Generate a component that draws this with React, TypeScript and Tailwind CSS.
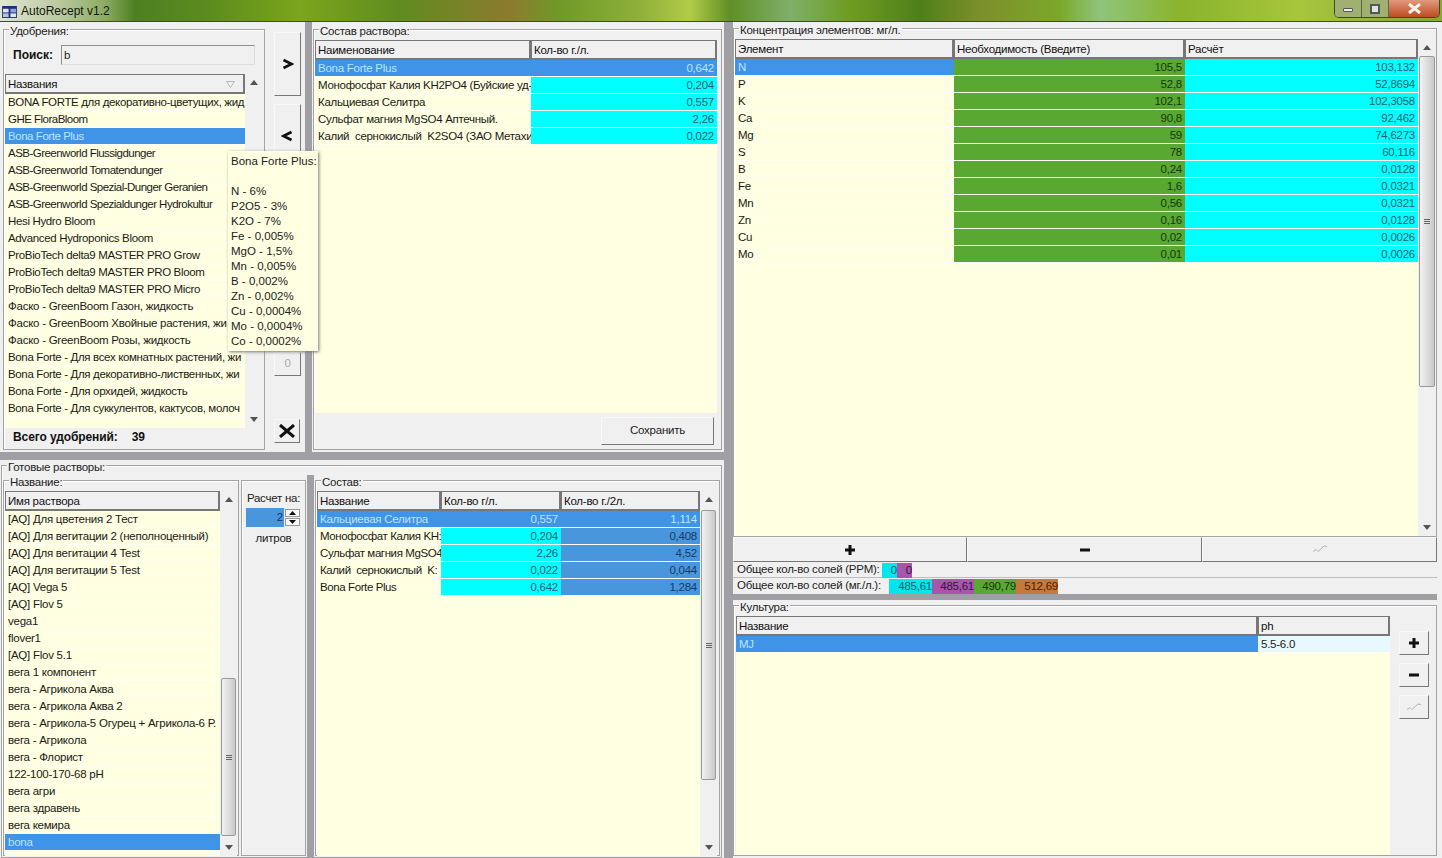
import React from "react";

type Cell = { t: string; cls?: string };
type Col = { title: string; w: string; sort?: boolean };

const CYAN = "bg-[#00ffff] text-right text-[#26606f]";
const GREEN = "bg-[#58a832] text-right text-[#16380c]";
const SEL = "bg-[#3f94e8] text-[#b9e4ff]";
const SELR = "bg-[#3f94e8] text-right text-[#b9e4ff]";
const MID = "bg-[#4a96dc] text-right text-[#123c66]";
const TIGHT = "text-[#1a1a1a] tracking-[-0.35px]";
const TIGHTER = "text-[#1a1a1a] tracking-[-0.52px]";

const fertilizers: [string, string?][] = [
    ["BONA FORTE для декоративно-цветущих, жид", TIGHT],
    ["GHE FloraBloom", TIGHTER],
    ["Bona Forte Plus", "bg-[#3f94e8] text-[#b9e4ff] tracking-[-0.45px]"],
    ["ASB-Greenworld Flussigdunger", TIGHTER],
    ["ASB-Greenworld Tomatendunger", TIGHTER],
    ["ASB-Greenworld Spezial-Dunger Geranien", TIGHTER],
    ["ASB-Greenworld Spezialdunger Hydrokultur", TIGHTER],
    ["Hesi Hydro Bloom", TIGHT],
    ["Advanced Hydroponics Bloom", TIGHT],
    ["ProBioTech delta9 MASTER PRO Grow", TIGHT],
    ["ProBioTech delta9 MASTER PRO Bloom", TIGHT],
    ["ProBioTech delta9 MASTER PRO Micro", TIGHT],
    ["Фаско - GreenBoom Газон, жидкость"],
    ["Фаско - GreenBoom Хвойные растения, жи"],
    ["Фаско - GreenBoom Розы, жидкость"],
    ["Bona Forte - Для всех комнатных растений, жи", TIGHT],
    ["Bona Forte - Для декоративно-лиственных, жи", TIGHT],
    ["Bona Forte - Для орхидей, жидкость", TIGHT],
    ["Bona Forte - Для суккулентов, кактусов, молоч", TIGHT],
];

const mixture = [
    ["Bona Forte Plus", "0,642"],
    ["Монофосфат Калия KH2PO4 (Буйские уд-", "0,204"],
    ["Кальциевая Селитра", "0,557"],
    ["Сульфат магния MgSO4 Аптечный.", "2,26"],
    ["Калий  сернокислый  K2SO4 (ЗАО Метахи", "0,022"],
];

const elements = [
    ["N", "105,5", "103,132"],
    ["P", "52,8", "52,8694"],
    ["K", "102,1", "102,3058"],
    ["Ca", "90,8", "92,462"],
    ["Mg", "59", "74,6273"],
    ["S", "78", "60,116"],
    ["B", "0,24", "0,0128"],
    ["Fe", "1,6", "0,0321"],
    ["Mn", "0,56", "0,0321"],
    ["Zn", "0,16", "0,0128"],
    ["Cu", "0,02", "0,0026"],
    ["Mo", "0,01", "0,0026"],
];

const solutions = [
    "[AQ] Для цветения 2 Тест",
    "[AQ] Для вегитации 2 (неполноценный)",
    "[AQ] Для вегитации 4 Test",
    "[AQ] Для вегитации 5 Test",
    "[AQ] Vega 5",
    "[AQ] Flov 5",
    "vega1",
    "flover1",
    "[AQ] Flov 5.1",
    "вега 1 компонент",
    "вега - Агрикола Аква",
    "вега - Агрикола Аква 2",
    "вега - Агрикола-5 Огурец + Агрикола-6 Р.",
    "вега - Агрикола",
    "вега - Флорист",
    "122-100-170-68 pH",
    "вега агри",
    "вега здравень",
    "вега кемира",
    "bona",
];

const solutionParts = [
    ["Кальциевая Селитра", "0,557", "1,114"],
    ["Монофосфат Калия KH:", "0,204", "0,408"],
    ["Сульфат магния MgSO4", "2,26", "4,52"],
    ["Калий  сернокислый  K:", "0,022", "0,044"],
    ["Bona Forte Plus", "0,642", "1,284"],
];

const tooltipLines = [
    "Bona Forte Plus:",
    "\u00a0",
    "N - 6%",
    "P2O5 - 3%",
    "K2O - 7%",
    "Fe - 0,005%",
    "MgO - 1,5%",
    "Mn - 0,005%",
    "B - 0,002%",
    "Zn - 0,002%",
    "Cu - 0,0004%",
    "Mo - 0,0004%",
    "Co - 0,0002%",
];

const Group = ({ label, className, children }: { label?: string; className: string; children?: React.ReactNode }) => (
    <div className={`relative border border-[#a3a3a3] shadow-[inset_1px_1px_0_#fff] ${className}`}>
        {label && <span className="absolute -top-[5px] left-[5px] bg-[#f0f0f0] px-px leading-[13px] text-[#222]">{label}</span>}
        {children}
    </div>
);

const Grid = ({ cols, rows, className }: { cols: Col[]; rows: Cell[][]; className?: string }) => (
    <div className={`flex min-w-0 flex-col bg-[#ffffe1] ${className ?? ""}`}>
        <div className="flex h-[20px] shrink-0">
            {cols.map((c) => (
                <div
                    key={c.title}
                    className={`${c.w} flex h-full items-center justify-between border border-r-2 border-b-2 border-[#777] bg-[#f0f0f0] pl-[2px] pr-[8px] pt-[2px] text-[#111]`}
                >
                    <span>{c.title}</span>
                    {c.sort && (
                        <svg width="9" height="7" viewBox="0 0 9 7" fill="none" stroke="#b8b8b8">
                            <path d="M0.500 0.500 H8.500 L4.500 6.500 Z" />
                        </svg>
                    )}
                </div>
            ))}
        </div>
        {rows.map((r, i) => (
            <div key={i} className="flex h-[17px] shrink-0 border-b border-[#fffff8]">
                {r.map((cell, j) => (
                    <div
                        key={j}
                        className={`${cols[j].w} overflow-hidden whitespace-pre px-[3px] leading-[16px] ${cell.cls ?? "text-[#1a1a1a]"}`}
                    >
                        {cell.t}
                    </div>
                ))}
            </div>
        ))}
    </div>
);

const Arrow = ({ up }: { up?: boolean }) => (
    <div className="flex h-[17px] shrink-0 items-center justify-center">
        <svg width="8" height="5" viewBox="0 0 8 5">
            <path d={up ? "M0 5 L4 0 L8 5 Z" : "M0 0 L8 0 L4 5 Z"} fill="#555" />
        </svg>
    </div>
);

const ScrollBar = ({ offset, thumb, className }: { offset?: string; thumb?: string; className: string }) => (
    <div className={`flex shrink-0 flex-col bg-[#f0f0f0] ${className}`}>
        <Arrow up />
        {thumb && (
            <>
                <div className={`${offset} shrink-0`} />
                <div className={`${thumb} mx-px flex shrink-0 items-center justify-center rounded-[2px] border border-[#9a9a9a] bg-[linear-gradient(90deg,#f2f2f2,#c9c9c9)]`}>
                    <div className="flex flex-col gap-px">
                        <div className="h-px w-[6px] bg-[#666]" />
                        <div className="h-px w-[6px] bg-[#666]" />
                        <div className="h-px w-[6px] bg-[#666]" />
                    </div>
                </div>
            </>
        )}
        <div className="flex-1" />
        <Arrow />
    </div>
);

const RaisedButton = ({ className, children }: { className: string; children?: React.ReactNode }) => (
    <div className={`flex shrink-0 items-center justify-center border border-t-[#f8f8f8] border-r-[#777] border-b-[#777] border-l-[#f8f8f8] bg-[#f0f0f0] ${className}`}>
        {children}
    </div>
);

const Plus = () => (
    <svg width="10" height="10" viewBox="0 0 10 10">
        <path d="M3.500 0h3v3.500H10v3H6.500V10h-3V6.500H0v-3h3.500z" fill="#111" />
    </svg>
);

const Minus = () => (
    <svg width="10" height="4" viewBox="0 0 10 4">
        <rect width="10" height="3" y="0.500" fill="#111" />
    </svg>
);

const Check = () => (
    <svg width="16" height="9" viewBox="0 0 16 9" fill="none" stroke="#b4b4b4" strokeWidth="1">
        <path d="M1 6.500 L4 4.500 L6 6.500 L12 1 L15 1.500" />
    </svg>
);

const Chevron = ({ d }: { d: string }) => (
    <svg width="13" height="12" viewBox="0 0 12 12" fill="none" stroke="#111" strokeWidth="2.600">
        <path d={d} />
    </svg>
);

const TitleBar = () => (
    <div className="flex h-[22px] shrink-0 items-start justify-between border-b border-[#3d4a2c] bg-[linear-gradient(90deg,#dfe5d2_0px,#b9c9a0_60px,#8cab62_105px,#4e7f22_135px,#5c8c1e_210px,#7ba51c_300px,#5f8c20_400px,#8d7a2e_510px,#6f9a28_560px,#8fb03a_640px,#b2cb48_690px,#5f8f25_730px,#7fb06a_790px,#6e9c22_850px,#4f7f1a_920px,#7d8f2a_980px,#7ba82a_1060px,#8fc47c_1100px,#8ab42c_1180px,#a7c63c_1300px,#8aa838_1420px)]">
        <div className="flex h-[21px] items-center pl-[2px]">
            <svg width="15" height="12" viewBox="0 0 16 13" className="mt-[2px]">
                <rect width="16" height="13" fill="#1f2f78" />
                <rect x="1" y="3" width="6" height="4" fill="#dfe6f4" />
                <rect x="9" y="3" width="6" height="4" fill="#8fa6d6" />
                <rect x="1" y="8" width="6" height="4" fill="#b7c4e0" />
                <rect x="9" y="8" width="6" height="4" fill="#dfe6f4" />
            </svg>
            <span className="ml-[4px] text-[12px] tracking-normal text-[#10180a]">AutoRecept v1.2</span>
        </div>
        <div className="mr-[2px] flex h-[18px] overflow-hidden rounded-b-[5px] border border-t-0 border-[#3f4a2c]">
            <div className="flex w-[27px] items-center justify-center border-r border-[#5b6a3c] bg-[#9fb070]">
                <div className="mt-[2px] h-[4px] w-[10px] rounded-[1px] border border-[#555] bg-[#eee]" />
            </div>
            <div className="flex w-[27px] items-center justify-center border-r border-[#5b6a3c] bg-[#9fb070]">
                <div className="h-[10px] w-[10px] border-2 border-[#4d5a55] bg-[#dfe4da]" />
            </div>
            <div className="flex w-[50px] items-center justify-center bg-[linear-gradient(180deg,#e09a7c,#c04a22)]">
                <svg width="13" height="11" viewBox="0 0 13 11">
                    <path d="M1 1 L12 10 M12 1 L1 10" stroke="#f4f0ea" strokeWidth="3" />
                </svg>
            </div>
        </div>
    </div>
);

const Tooltip = () => (
    <div className="absolute left-[228px] top-[151px] h-[200px] w-[90px] bg-[#ffffe1] pl-[3px] pt-[3px] text-[11.5px] leading-[15px] tracking-normal text-[#222] shadow-[1px_1px_3px_#777]">
        {tooltipLines.map((l, i) => (
            <div key={i} className="whitespace-nowrap">{l}</div>
        ))}
    </div>
);

const Fertilizers = () => (
    <Group label="Удобрения:" className="ml-[3px] mt-[7px] flex h-[421px] w-[262px] shrink-0 flex-col">
        <div className="mt-[15px] flex h-[19px] items-center">
            <span className="ml-[9px] w-[48px] text-[12px] font-bold tracking-normal text-[#111]">Поиск:</span>
            <div className="h-[20px] w-[194px] border border-[#8f8f8f] border-b-[#ddd] border-r-[#ddd] bg-[#f0f0f0] pl-[2px] leading-[18px]">b</div>
        </div>
        <div className="ml-px mt-[10px] flex h-[354px]">
            <Grid
                className="w-[240px]"
                cols={[{ title: "Названия", w: "w-[240px]", sort: true }]}
                rows={fertilizers.map(([t, cls]) => [{ t, cls }])}
            />
            <ScrollBar className="w-[17px]" />
        </div>
        <div className="ml-[9px] mt-[2px] flex gap-[14px] text-[12px] font-bold leading-[15px] tracking-[-0.1px] text-[#111]">
            <span>Всего удобрений:</span>
            <span>39</span>
        </div>
    </Group>
);

const ActionButtons = () => (
    <div className="ml-[9px] flex w-[27px] shrink-0 flex-col pt-[10px]">
        <RaisedButton className="h-[64px] w-[27px]"><Chevron d="M2 2 L10 6 L2 10" /></RaisedButton>
        <RaisedButton className="mt-[8px] h-[64px] w-[27px]"><Chevron d="M10 2 L2 6 L10 10" /></RaisedButton>
        <div className="h-[184px]" />
        <RaisedButton className="h-[24px] w-[27px] text-[#aaa]">0</RaisedButton>
        <div className="h-[43px]" />
        <RaisedButton className="h-[24px] w-[26px]">
            <svg width="16" height="14" viewBox="0 0 16 14">
                <path d="M1 1 L15 13 M15 1 L1 13" stroke="#111" strokeWidth="3" />
            </svg>
        </RaisedButton>
    </div>
);

const Mixture = () => (
    <Group label="Состав раствора:" className="ml-px mt-[7px] flex h-[421px] w-[409px] shrink-0 flex-col">
        <Grid
            className="ml-px mt-[10px] h-[373px] w-[402px]"
            cols={[{ title: "Наименование", w: "w-[216px]" }, { title: "Кол-во г./л.", w: "w-[186px]" }]}
            rows={mixture.map((r, i) => [
                { t: r[0], cls: i === 0 ? SEL : "text-[#1a1a1a] tracking-[-0.3px]" },
                { t: r[1], cls: i === 0 ? SELR : CYAN },
            ])}
        />
        <RaisedButton className="ml-[287px] mt-[4px] h-[28px] w-[113px] text-[#222]">Сохранить</RaisedButton>
    </Group>
);

const SolutionList = () => (
    <Group label="Название:" className="ml-px flex h-[376px] w-[236px] shrink-0">
        <Grid
            className="ml-px mt-[10px] h-[365px] w-[215px]"
            cols={[{ title: "Имя раствора", w: "w-[215px]" }]}
            rows={solutions.map((n, i) => [{ t: n, cls: i === 19 ? SEL : undefined }])}
        />
        <ScrollBar className="mt-[10px] h-[365px] w-[17px]" offset="h-[170px]" thumb="h-[158px]" />
    </Group>
);

const Calc = () => (
    <Group className="ml-[2px] flex h-[376px] w-[65px] shrink-0 flex-col items-center">
        <span className="mt-[10px] leading-[15px]">Расчет на:</span>
        <div className="mt-[2px] flex h-[19px] w-[55px] items-center bg-[#c8d4de]">
            <div className="flex h-full flex-1 items-center justify-end bg-[#4a96dc] pr-px text-[#123c66]">2</div>
            <div className="flex h-full w-[17px] flex-col gap-px bg-[#eee] px-px py-px">
                <div className="flex flex-1 items-center justify-center border border-[#999] bg-[#f8f8f8]">
                    <svg width="7" height="4" viewBox="0 0 7 4"><path d="M0 4 L3.500 0 L7 4 Z" fill="#111" /></svg>
                </div>
                <div className="flex flex-1 items-center justify-center border border-[#999] bg-[#f8f8f8]">
                    <svg width="7" height="4" viewBox="0 0 7 4"><path d="M0 0 L7 0 L3.500 4 Z" fill="#111" /></svg>
                </div>
            </div>
        </div>
        <span className="mt-[4px] leading-[15px]">литров</span>
    </Group>
);

const SolutionParts = () => (
    <Group label="Состав:" className="ml-px flex h-[376px] w-[405px] shrink-0">
        <Grid
            className="ml-px mt-[10px] h-[365px] w-[383px]"
            cols={[
                { title: "Название", w: "w-[124px]" },
                { title: "Кол-во г/л.", w: "w-[120px]" },
                { title: "Кол-во г./2л.", w: "w-[139px]" },
            ]}
            rows={solutionParts.map((r, i) => [
                { t: r[0], cls: i === 0 ? SEL : "text-[#1a1a1a] tracking-[-0.4px]" },
                { t: r[1], cls: i === 0 ? SELR : CYAN },
                { t: r[2], cls: i === 0 ? SELR : MID },
            ])}
        />
        <ScrollBar className="mt-[10px] h-[365px] w-[17px]" offset="h-[2px]" thumb="h-[270px]" />
    </Group>
);

const Concentration = () => (
    <Group label="Концентрация элементов: мг/л." className="mt-[6px] flex h-[509px] w-[704px] shrink-0">
        <Grid
            className="ml-px mt-[10px] w-[683px]"
            cols={[
                { title: "Элемент", w: "w-[219px]" },
                { title: "Необходимость (Введите)", w: "w-[231px]" },
                { title: "Расчёт", w: "w-[233px]" },
            ]}
            rows={elements.map((r, i) => [
                { t: r[0], cls: i === 0 ? SEL : undefined },
                { t: r[1], cls: GREEN },
                { t: r[2], cls: CYAN },
            ])}
        />
        <ScrollBar className="mt-[10px] w-[18px]" offset="h-0" thumb="h-[331px]" />
    </Group>
);

const Chip = ({ cls, w, t }: { cls: string; w: string; t: string }) => (
    <span className={`${w} h-[15px] text-right leading-[15px] ${cls}`}>{t}</span>
);

const Culture = () => (
    <Group label="Культура:" className="mt-[5px] flex h-[251px] w-[704px] shrink-0">
        <Grid
            className="ml-[2px] mt-[10px] h-[239px] w-[654px]"
            cols={[{ title: "Название", w: "w-[522px]" }, { title: "ph", w: "w-[132px]" }]}
            rows={[[{ t: "MJ", cls: SEL }, { t: "5.5-6.0", cls: "bg-[#e8f8ff] text-[#222]" }]]}
        />
        <div className="ml-[9px] mt-[25px] flex flex-col gap-[8px]">
            <RaisedButton className="h-[24px] w-[30px]"><Plus /></RaisedButton>
            <RaisedButton className="h-[24px] w-[30px]"><Minus /></RaisedButton>
            <RaisedButton className="h-[24px] w-[30px]"><Check /></RaisedButton>
        </div>
    </Group>
);

const App: React.FC = () => (
    <div className="relative flex h-[858px] w-[1442px] flex-col overflow-hidden bg-[#f0f0f0] font-['Liberation_Sans',sans-serif] text-[11.5px] tracking-[-0.25px] text-[#222]">
        <TitleBar />
        <div className="flex flex-1">
            <div className="flex w-[724px] shrink-0 flex-col">
                <div className="flex h-[430px] shrink-0">
                    <Fertilizers />
                    <ActionButtons />
                    <div className="ml-[4px] w-[7px] shrink-0 bg-[#a0a0a4]" />
                    <Mixture />
                </div>
                <div className="h-[8px] shrink-0 bg-[#a0a0a4]" />
                <div className="flex flex-1 pt-[5px]">
                    <Group label="Готовые растворы:" className="ml-px h-[393px] w-[721px] shrink-0 pt-[14px]">
                        <div className="flex">
                            <SolutionList />
                            <Calc />
                            <div className="w-px shrink-0" />
                            <div className="-mt-[5px] h-[383px] w-[7px] shrink-0 bg-[#a0a0a4]" />
                            <SolutionParts />
                        </div>
                    </Group>
                </div>
            </div>
            <div className="w-[9px] shrink-0 bg-[#a0a0a4]" />
            <div className="flex min-w-0 flex-1 flex-col">
                <Concentration />
                <div className="flex h-[26px] w-[704px] shrink-0">
                    <RaisedButton className="h-[25px] w-[234px]"><Plus /></RaisedButton>
                    <RaisedButton className="h-[25px] w-[235px]"><Minus /></RaisedButton>
                    <RaisedButton className="h-[25px] w-[235px]"><Check /></RaisedButton>
                </div>
                <div className="flex h-[15px] w-[704px] shrink-0 items-center whitespace-nowrap border-b border-[#bdbdbd] pl-[4px]">
                    <span className="w-[145px]">Общее кол-во солей (PPM):</span>
                    <Chip cls="bg-[#00e6ee] text-[#245a66]" w="w-[15px]" t="0" />
                    <Chip cls="bg-[#a855ae] text-[#3a123c]" w="w-[15px]" t="0" />
                </div>
                <div className="flex h-[16px] w-[704px] shrink-0 items-center whitespace-nowrap pl-[4px]">
                    <span className="w-[152px]">Общее кол-во солей (мг./л.):</span>
                    <Chip cls="bg-[#00e6ee] text-[#245a66]" w="w-[43px]" t="485,61" />
                    <Chip cls="bg-[#a855ae] text-[#3a123c]" w="w-[42px]" t="485,61" />
                    <Chip cls="bg-[#58a832] text-[#16380c]" w="w-[42px]" t="490,79" />
                    <Chip cls="bg-[#c87838] text-[#4a2008]" w="w-[42px]" t="512,69" />
                </div>
                <div className="h-[6px] w-[704px] shrink-0 bg-[#a0a0a4]" />
                <Culture />
            </div>
        </div>
        <Tooltip />
    </div>
);

export default App;
